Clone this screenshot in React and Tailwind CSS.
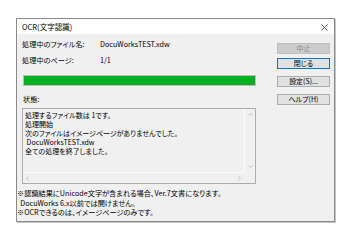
export default function App() {
  const font = "font-['Noto_Sans_CJK_JP','Noto_Sans',sans-serif] [font-feature-settings:'palt']";
  const btn = "h-[11px] w-[53px] flex items-center justify-center text-[7px] leading-none border";
  return (
    <div className={`w-[361px] h-[248px] bg-white pt-[18px] pl-[16px] text-black ${font}`}>
      <div className="w-[319px] h-[204px] border border-[#8a8a8a] shadow-[1px_1px_0_#c4c4c4] flex flex-col bg-[#f0f0f0]">
        {/* title bar */}
        <div className="h-[15px] bg-white flex items-center justify-between pl-[5px] pr-[6px]">
          <span className="text-[7.5px] leading-none">OCR(文字認識)</span>
          <svg width="7" height="7" viewBox="0 0 7 7" className="mt-[1px]">
            <path d="M0.5 0.5 L6.5 6.5 M6.5 0.5 L0.5 6.5" stroke="#333" strokeWidth="0.8" fill="none" />
          </svg>
        </div>
        {/* body */}
        <div className="flex flex-row pl-[5px]">
          <div className="w-[234px] flex flex-col pt-[6px]">
            <div className="h-[10px] flex items-center text-[7.2px] leading-none">
              <span className="w-[78px]">処理中のファイル名:</span>
              <span>DocuWorksTEST.xdw</span>
            </div>
            <div className="h-[10px] mt-[6px] flex items-center text-[7.2px] leading-none">
              <span className="w-[78px]">処理中のページ:</span>
              <span>1/1</span>
            </div>
            <div className="h-[11px] mt-[9px] ml-[1px] w-[233px] border border-[#bcbcbc] bg-[#e6e6e6]">
              <div className="h-full w-full bg-[#06b025]" />
            </div>
            <div className="h-[10px] mt-[9px] flex items-center text-[7.2px] leading-none pl-[1px]">状態:</div>
            <div className="mt-[3px] h-[76px] w-[234px] border border-[#acacac] flex flex-col">
              <div className="flex flex-row flex-1">
                <div className="flex-1 pl-[2px] pt-[2px] text-[7px] leading-[9px] whitespace-pre">
                  <div>処理するファイル数は 1です。</div>
                  <div>処理開始</div>
                  <div>次のファイルはイメージページがありませんでした。</div>
                  <div> DocuWorksTEST.xdw</div>
                  <div>全ての処理を終了しました。</div>
                </div>
                <div className="w-[11px] border-l border-[#fafafa] flex flex-col items-center justify-between py-[4px]">
                  <svg width="5" height="3" viewBox="0 0 5 3"><path d="M0.5 2.5 L2.5 0.5 L4.5 2.5" stroke="#b5b5b5" strokeWidth="0.8" fill="none" /></svg>
                  <svg width="5" height="3" viewBox="0 0 5 3"><path d="M0.5 0.5 L2.5 2.5 L4.5 0.5" stroke="#b5b5b5" strokeWidth="0.8" fill="none" /></svg>
                </div>
              </div>
              <div className="h-[11px] flex flex-row">
                <div className="flex-1 border-t border-[#fafafa] flex items-center justify-between px-[3px]">
                  <svg width="3" height="5" viewBox="0 0 3 5"><path d="M2.5 0.5 L0.5 2.5 L2.5 4.5" stroke="#b5b5b5" strokeWidth="0.8" fill="none" /></svg>
                  <svg width="3" height="5" viewBox="0 0 3 5"><path d="M0.5 0.5 L2.5 2.5 L0.5 4.5" stroke="#b5b5b5" strokeWidth="0.8" fill="none" /></svg>
                </div>
                <div className="w-[11px] bg-[#f0f0f0]" />
              </div>
            </div>
          </div>
          <div className="ml-[21px] pt-[9px] flex flex-col">
            <div className={`${btn} bg-[#cccccc] border-[#bfbfbf] text-[#8a8a8a]`}>中止</div>
            <div className={`${btn} mt-[4px] bg-[#e1e1e1] border-[#0078d7]`}>閉じる</div>
            <div className={`${btn} mt-[7px] bg-[#e1e1e1] border-[#adadad]`}>設定(S)...</div>
            <div className={`${btn} mt-[7px] bg-[#e1e1e1] border-[#adadad]`}>ヘルプ(H)</div>
          </div>
        </div>
        {/* footer */}
        <div className="mt-[5px] text-[7.2px] leading-[9.5px] whitespace-pre">
          <div>※認識結果にUnicode文字が含まれる場合、Ver.7文書になります。</div>
          <div>  DocuWorks 6.x以前では開けません。</div>
          <div>※OCRできるのは、イメージページのみです。</div>
        </div>
      </div>
    </div>
  );
}
